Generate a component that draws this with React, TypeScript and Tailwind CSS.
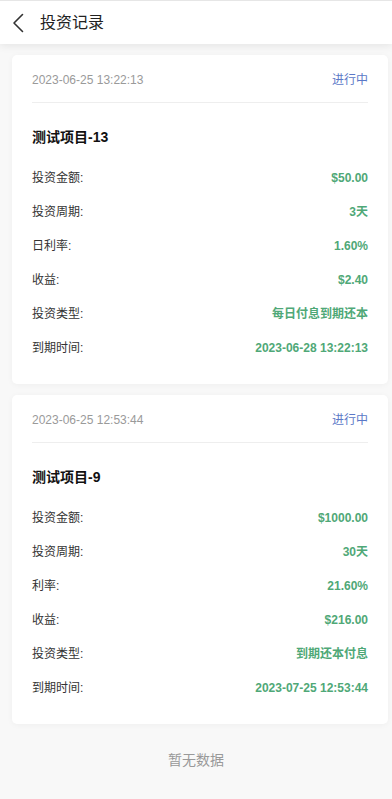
import React from "react";

type Row = [string, string];
type Rec = { date: string; title: string; rows: Row[] };

const records: Rec[] = [
  {
    date: "2023-06-25 13:22:13",
    title: "测试项目-13",
    rows: [
      ["投资金额:", "$50.00"],
      ["投资周期:", "3天"],
      ["日利率:", "1.60%"],
      ["收益:", "$2.40"],
      ["投资类型:", "每日付息到期还本"],
      ["到期时间:", "2023-06-28 13:22:13"],
    ],
  },
  {
    date: "2023-06-25 12:53:44",
    title: "测试项目-9",
    rows: [
      ["投资金额:", "$1000.00"],
      ["投资周期:", "30天"],
      ["利率:", "21.60%"],
      ["收益:", "$216.00"],
      ["投资类型:", "到期还本付息"],
      ["到期时间:", "2023-07-25 12:53:44"],
    ],
  },
];

function Card({ r }: { r: Rec }) {
  return (
    <div className="bg-white rounded-[5px] px-5 pb-[19px] shadow-[0_1px_6px_rgba(0,0,0,0.04)]">
      <div className="flex items-center justify-between pt-4 pb-[13px] border-b border-[#eeeeee]">
        <span className="text-[12px] leading-[18px] text-[#9a9a9a]">{r.date}</span>
        <span className="text-[12px] leading-[18px] text-[#5b78c7]">进行中</span>
      </div>
      <div className="mt-6 text-[14px] leading-[20px] font-bold text-[#111]">{r.title}</div>
      <div className="mt-[14px] flex flex-col">
        {r.rows.map(([k, v]) => (
          <div key={k} className="h-[34px] flex items-center justify-between">
            <span className="text-[12px] text-[#333]">{k}</span>
            <span className="text-[12px] font-bold text-[#4fa877]">{v}</span>
          </div>
        ))}
      </div>
    </div>
  );
}

export default function App() {
  return (
    <div
      className="min-h-[799px] w-full bg-[#f8f8f8]"
      style={{ fontFamily: '"Liberation Sans", "Noto Sans CJK SC", sans-serif' }}
    >
      <div className="h-[44px] bg-white border-t border-[#e6e6e6] flex items-center shadow-[0_2px_8px_rgba(0,0,0,0.08)] relative z-10">
        <div className="w-[40px] h-full flex items-center pl-[12px]">
          <svg width="12" height="20" viewBox="0 0 12 20" fill="none">
            <path d="M10.5 1.5 L2 10 L10.5 18.5" stroke="#333" strokeWidth="1.6" strokeLinecap="round" strokeLinejoin="round" />
          </svg>
        </div>
        <span className="text-[16px] text-[#222]">投资记录</span>
      </div>
      <div className="pl-3 pr-1 pt-[11px] flex flex-col gap-[11px]">
        {records.map((r) => (
          <Card key={r.date} r={r} />
        ))}
      </div>
      <div className="pt-[26px] text-center text-[14px] leading-[20px] text-[#999]">暂无数据</div>
    </div>
  );
}
